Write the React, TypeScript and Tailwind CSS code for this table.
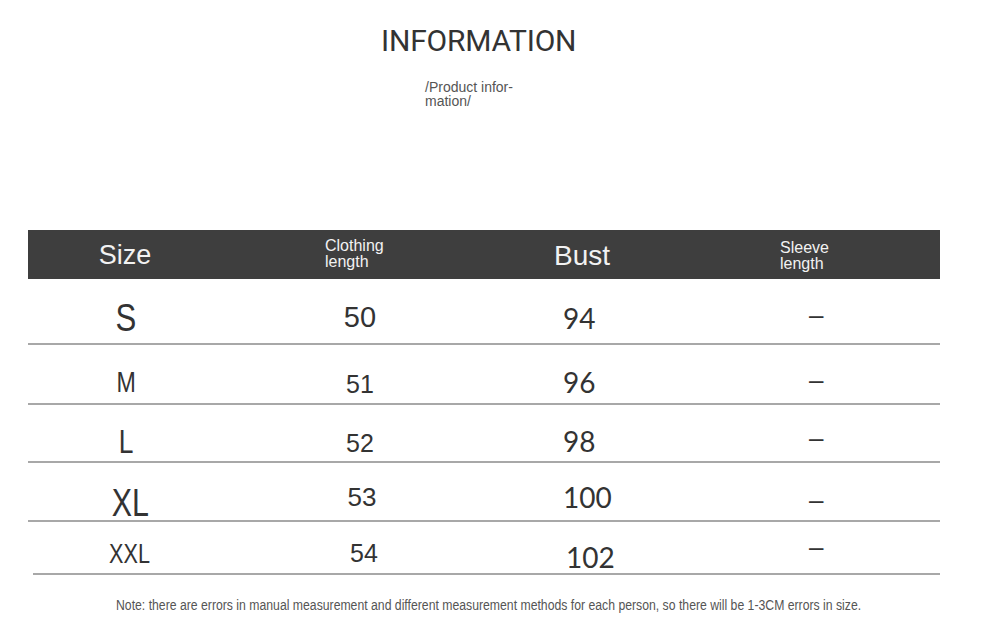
import React from "react";

const sans = { fontFamily: "'Liberation Sans', Arial, sans-serif" };

type Row = {
  rowCls: string;
  size: string;
  sizeCls: string;
  len: string;
  lenCls: string;
  bust: string;
  bustCls: string;
  dashCls: string;
  border: boolean;
};

const rows: Row[] = [
  { rowCls: "h-[66px] pt-[12px]", size: "S", sizeCls: "text-[39px] translate-x-[1px]", len: "50", lenCls: "text-[29px]", bust: "94", bustCls: "translate-y-[1px]", dashCls: "-translate-y-[2px]", border: true },
  { rowCls: "h-[60px] pt-[16px]", size: "M", sizeCls: "text-[29px] translate-x-[1px]", len: "51", lenCls: "text-[25px] translate-y-[2px]", bust: "96", bustCls: "", dashCls: "-translate-y-[2px]", border: true },
  { rowCls: "h-[58px] pt-[16px]", size: "L", sizeCls: "text-[33px] translate-x-[1px]", len: "52", lenCls: "text-[25px] translate-y-[2px]", bust: "98", bustCls: "", dashCls: "-translate-y-[3px]", border: true },
  { rowCls: "h-[59px] pt-[13px]", size: "XL", sizeCls: "text-[38px] translate-x-[5px] translate-y-[5px]", len: "53", lenCls: "text-[26px] -translate-y-[1px] translate-x-[2px]", bust: "100", bustCls: "-translate-y-[1px]", dashCls: "translate-y-[2px]", border: true },
  { rowCls: "h-[51px] pt-[11px]", size: "XXL", sizeCls: "text-[27px] translate-x-[5px] translate-y-[1px]", len: "54", lenCls: "text-[25px] translate-x-[4px]", bust: "102", bustCls: "translate-y-[4px] translate-x-[3px]", dashCls: "-translate-y-[6px]", border: false },
];

export default function App() {
  return (
    <div className="w-[985px] h-[630px] bg-white overflow-hidden">
      <div
        className="pt-[26px] pl-[381px] text-[30px] leading-[30px] text-[#333333] tracking-[-0.2px]"
        style={{ fontFamily: "Roboto, sans-serif" }}
      >
        INFORMATION
      </div>
      <div className="mt-[24px] pl-[425px] text-[14px] leading-[14px] text-[#555555]" style={sans}>
        /Product infor-
        <br />
        mation/
      </div>

      <div className="mt-[122px] ml-[28px] w-[912px]" style={sans}>
        <div className="h-[49px] bg-[#3e3e3e] grid grid-cols-[194px_276px_170px_272px] text-[#f2f2f2]">
          <div className="flex items-center justify-center text-[27px] leading-none translate-y-[1px]">Size</div>
          <div className="flex items-center pl-[103px] text-[16px] leading-[16px] -translate-y-[1px]">
            <div>
              Clothing
              <br />
              length
            </div>
          </div>
          <div className="flex items-center pl-[56px] text-[28px] leading-none translate-y-[1px]">Bust</div>
          <div className="flex items-center pl-[112px] text-[16px] leading-[16px] translate-y-[1px]">
            <div>
              Sleeve
              <br />
              length
            </div>
          </div>
        </div>

        {rows.map((r) => (
          <div
            key={r.size}
            className={`${r.rowCls} grid grid-cols-[194px_276px_170px_272px] text-[#333333] ${r.border ? "border-b-2 border-[#a8a8a8]" : ""}`}
          >
            <div className="flex items-center justify-center">
              <span className={`${r.sizeCls} inline-block scale-x-[0.8] leading-none`}>{r.size}</span>
            </div>
            <div className="flex items-center justify-center">
              <span className={`${r.lenCls} leading-none`}>{r.len}</span>
            </div>
            <div className="flex items-center pl-[65px]">
              <span className={`${r.bustCls} text-[28px] leading-none`} style={{ fontFamily: "Lato, sans-serif" }}>
                {r.bust}
              </span>
            </div>
            <div className="flex items-center pl-[141px]">
              <span className={`${r.dashCls} text-[26px] leading-none`}>–</span>
            </div>
          </div>
        ))}
        <div className="ml-[5px] h-[2px] bg-[#a8a8a8]" />
      </div>

      <div className="mt-[18px] pl-[116px] text-[#555555]" style={sans}>
        <span className="inline-block origin-left scale-x-[0.874] whitespace-nowrap text-[14px] leading-none">
          Note: there are errors in manual measurement and different measurement methods for each person, so there will be 1-3CM errors in size.
        </span>
      </div>
    </div>
  );
}
